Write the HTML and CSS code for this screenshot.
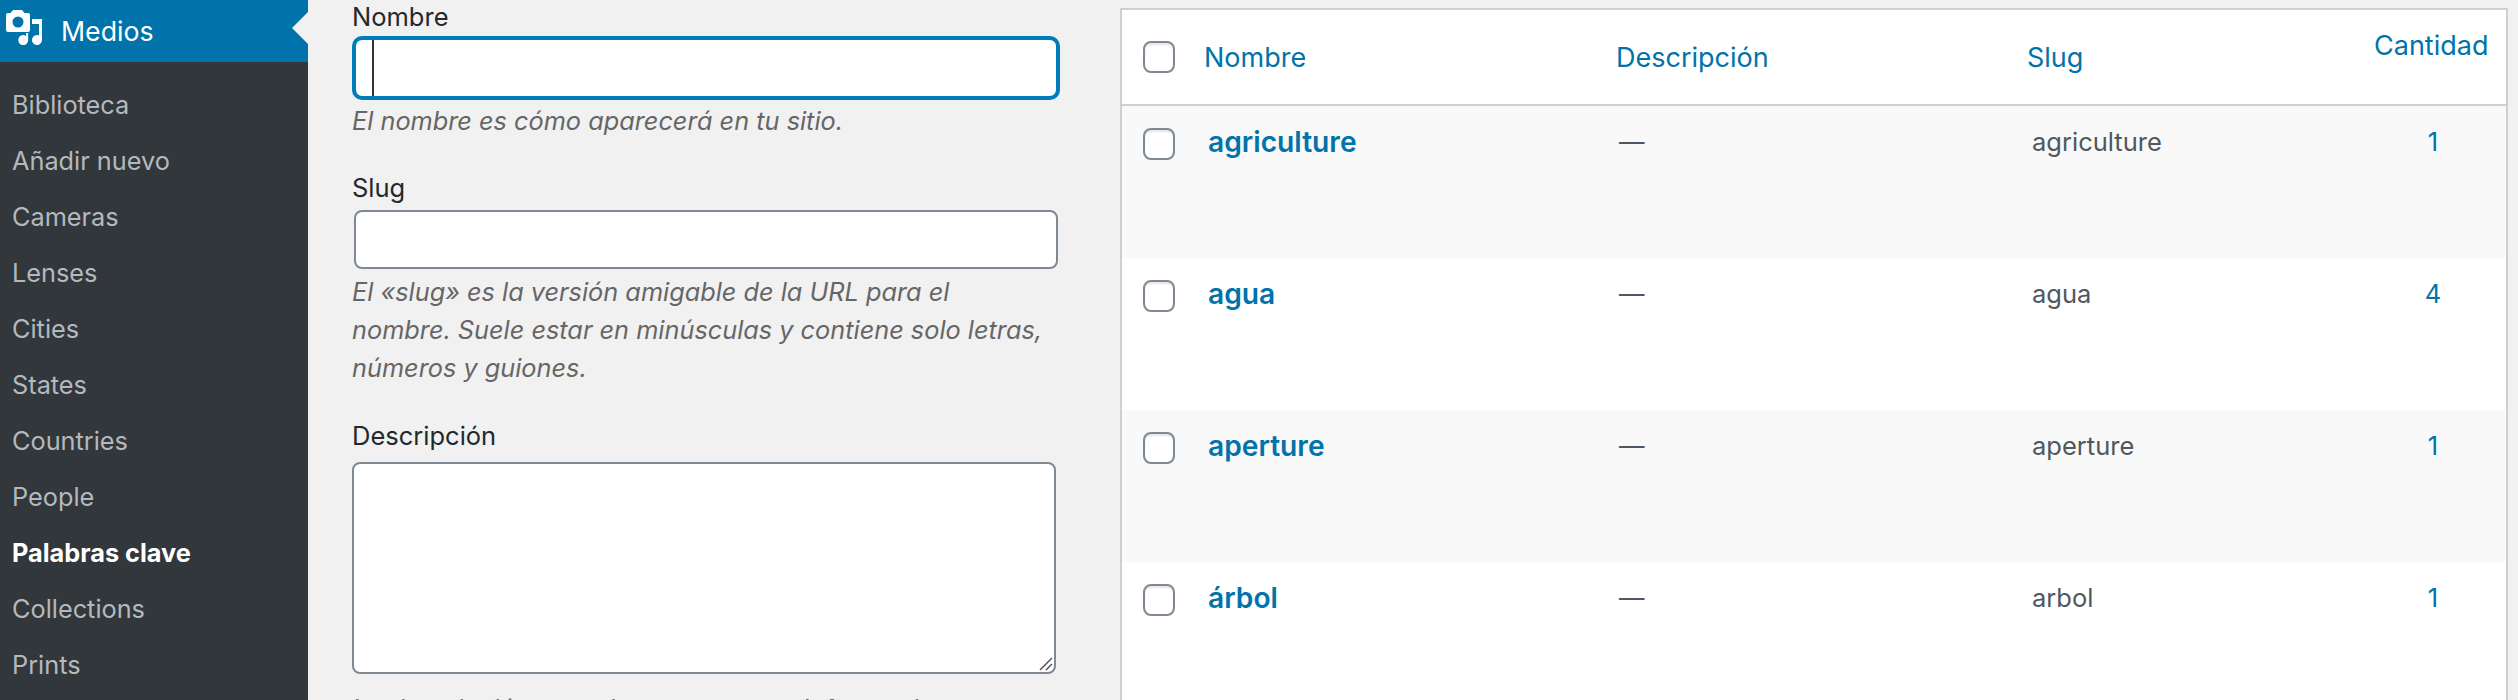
FILE: index.html
```html
<!DOCTYPE html>
<html lang="es">
<head>
<meta charset="utf-8">
<title>Palabras clave</title>
<link rel="stylesheet" href="styles.css">
</head>
<body>
<div class="page">
  <nav class="sidebar">
    <div class="menu-head">
      <svg class="menu-icon" viewBox="0 0 48 48" aria-hidden="true">
        <path fill="#fff" fill-rule="evenodd" d="M13 10h9l2.500 3H28a2 2 0 0 1 2 2v15a2 2 0 0 1-2 2H8a2 2 0 0 1-2-2V15a2 2 0 0 1 2-2h2.500zM18 16.500a5.500 5.500 0 1 0 0 11 5.500 5.500 0 0 0 0-11z"/>
        <path fill="#fff" d="M26 33h2.200v7a5 5 0 1 1-2.200-4.100zM32 19h10v21a5 5 0 1 1-3-4.600V24h-7z"/>
      </svg>
      <span class="menu-title">Medios</span>
      <span class="menu-notch"></span>
    </div>
    <ul class="submenu">
      <li>Biblioteca</li>
      <li>Añadir nuevo</li>
      <li>Cameras</li>
      <li>Lenses</li>
      <li>Cities</li>
      <li>States</li>
      <li>Countries</li>
      <li>People</li>
      <li class="current">Palabras clave</li>
      <li>Collections</li>
      <li>Prints</li>
    </ul>
  </nav>
  <main class="content">
    <form class="term-form">
      <label class="field-label label-name">Nombre</label>
      <div class="text-input focused"><span class="caret"></span></div>
      <p class="hint hint-name">El nombre es cómo aparecerá en tu sitio.</p>
      <label class="field-label label-slug">Slug</label>
      <div class="text-input slug"></div>
      <p class="hint hint-slug">El «slug» es la versión amigable de la URL para el nombre. Suele estar en minúsculas y contiene solo letras, números y guiones.</p>
      <label class="field-label label-desc">Descripción</label>
      <div class="textarea">
        <svg class="grip" viewBox="0 0 14 14" aria-hidden="true"><path d="M1 13 13 1M7 13l6-6" stroke="#555" stroke-width="1.500" fill="none"/></svg>
      </div>
      <p class="hint">La descripción no es importante por defecto; sin embargo, algunos temas pueden mostrarla.</p>
    </form>
    <section class="table-wrap">
      <table class="terms">
        <colgroup><col class="c-check"><col class="c-name"><col class="c-desc"><col class="c-slug"><col class="c-count"></colgroup>
        <thead>
          <tr>
            <th class="check"><span class="box"></span></th>
            <th>Nombre</th>
            <th>Descripción</th>
            <th>Slug</th>
            <th class="head-count">Cantidad</th>
          </tr>
        </thead>
        <tbody>
          <tr class="alt"><td class="check"><span class="box"></span></td><td class="name">agriculture</td><td class="desc">—</td><td class="slugc">agriculture</td><td class="count">1</td></tr>
          <tr><td class="check"><span class="box"></span></td><td class="name">agua</td><td class="desc">—</td><td class="slugc">agua</td><td class="count">4</td></tr>
          <tr class="alt"><td class="check"><span class="box"></span></td><td class="name">aperture</td><td class="desc">—</td><td class="slugc">aperture</td><td class="count">1</td></tr>
          <tr><td class="check"><span class="box"></span></td><td class="name">árbol</td><td class="desc">—</td><td class="slugc">arbol</td><td class="count">1</td></tr>
        </tbody>
      </table>
    </section>
  </main>
</div>
</body>
</html>
```

FILE: styles.css
```css
* { box-sizing: border-box; }
html, body { margin: 0; padding: 0; height: 700px; overflow: hidden; }
body { background: #f1f1f1; font-family: Inter, "Liberation Sans", sans-serif; font-size: 26px; color: #23282d; }
.page { display: flex; height: 700px; overflow: hidden; }

.sidebar { flex: 0 0 308px; background: #32373c; }
.menu-head { position: relative; display: flex; align-items: center; height: 62px; background: #0073aa; color: #fff; }
.menu-icon { width: 48px; height: 48px; flex: none; align-self: flex-start; }
.menu-title { margin-left: 13px; font-size: 26.700px; }
.menu-notch { position: absolute; right: 0; top: 12px; border: 16px solid transparent; border-left: 0; border-right-color: #f1f1f1; }
.submenu { list-style: none; margin: 0; padding: 15px 0 0 12px; color: #b4b9be; }
.submenu li { height: 56px; line-height: 56px; font-size: 25.300px; white-space: nowrap; }
.submenu .current { color: #fff; font-weight: 700; }

.content { flex: 1; display: flex; align-items: flex-start; min-width: 0; padding-left: 44px; }
.term-form { flex: 0 0 710px; }
.field-label { display: block; line-height: 32px; font-size: 25.500px; }
.label-name { height: 36px; padding-top: 1px; }
.label-slug { height: 38px; }
.label-desc { height: 42px; }
.text-input { position: relative; background: #fff; }
.text-input.focused { width: 708px; height: 64px; border: 4px solid #007cba; border-radius: 10px; }
.text-input.slug { width: 704px; height: 59px; margin-left: 2px; border: 2px solid #7e8993; border-radius: 8px; }
.caret { position: absolute; left: 16px; top: 0; width: 2px; height: 100%; background: #32373c; }
.hint { margin: 0; width: 698px; font-size: 25.300px; line-height: 38px; font-style: italic; color: #666; }
.hint-name { height: 72px; padding-top: 2px; }
.hint-slug { height: 151px; padding-top: 4px; }
.textarea { position: relative; width: 704px; height: 212px; margin-bottom: 16px; background: #fff; border: 2px solid #7e8993; border-radius: 8px; }
.grip { position: absolute; right: 1px; bottom: 1px; width: 14px; height: 14px; }

.table-wrap { flex: none; width: 1388px; margin: 8px 0 0 58px; background: #fff; border: 2px solid #ccd0d4; border-bottom: 0; }
.terms { width: 100%; border-collapse: separate; border-spacing: 0; table-layout: fixed; }
.c-check { width: 82px; }
.c-name { width: 412px; }
.c-desc { width: 411px; }
.c-slug { width: 347px; }
.terms th { height: 96px; padding: 0; border-bottom: 2px solid #ccd0d4; font-size: 27px; font-weight: 400; text-align: left; vertical-align: middle; color: #0073aa; }
.terms th.head-count { padding-bottom: 24px; }
.terms td { height: 152px; padding: 18px 0 0 3px; line-height: 36px; vertical-align: top; font-size: 25.500px; color: #50575e; }
.terms .alt { background: #f9f9f9; }
.box { display: block; width: 32px; height: 32px; margin-left: 21px; background: #fff; border: 2px solid #7e8993; border-radius: 8px; box-shadow: inset 0 2px 2px rgba(0,0,0,.1); }
.terms td.check { padding: 22px 0 0; }
.terms td.name { padding-left: 4px; font-size: 28.200px; font-weight: 600; color: #0073aa; }
.terms td.slugc { padding-left: 5px; }
.terms td.count { padding-left: 0; padding-right: 14px; text-align: center; color: #0073aa; }
```
